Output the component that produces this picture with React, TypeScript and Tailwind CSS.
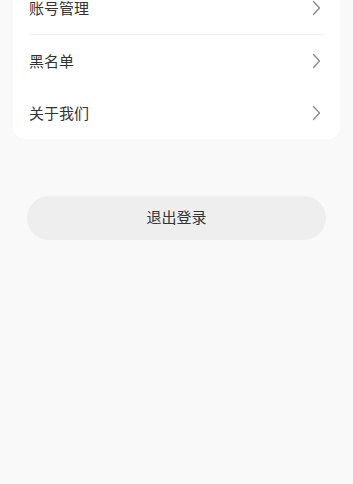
const items = ["账号管理", "黑名单", "关于我们"];

function Chevron() {
  return (
    <svg width="9" height="16" viewBox="0 0 9 16" fill="none" className="shrink-0">
      <path d="M1.5 1.5L7.5 8L1.5 14.5" stroke="#8a8a8a" strokeWidth="1.3" strokeLinecap="round" strokeLinejoin="round" />
    </svg>
  );
}

export default function App() {
  return (
    <div
      className="min-h-[484px] overflow-hidden bg-[#f9f9f9]"
      style={{ fontFamily: '"Noto Sans CJK SC", "Noto Sans", sans-serif' }}
    >
      <div className="mx-[13px] -mt-[18px] rounded-xl bg-white pl-[16px] pr-[15px]">
        {items.map((label, i) => (
          <div key={label}>
            <div className="flex h-[52px] items-center justify-between">
              <span className="text-[15px] text-[#333333]">{label}</span>
              <div className="mr-[4px]">
                <Chevron />
              </div>
            </div>
            {i === 0 && <div className="h-px bg-[#f2f2f2]" />}
          </div>
        ))}
      </div>
      <div className="px-[27px] pt-[57px]">
        <button className="flex h-[44px] w-full items-center justify-center rounded-full bg-[#eeeeee] pb-px text-[15px] text-[#333333]">
          退出登录
        </button>
      </div>
    </div>
  );
}
